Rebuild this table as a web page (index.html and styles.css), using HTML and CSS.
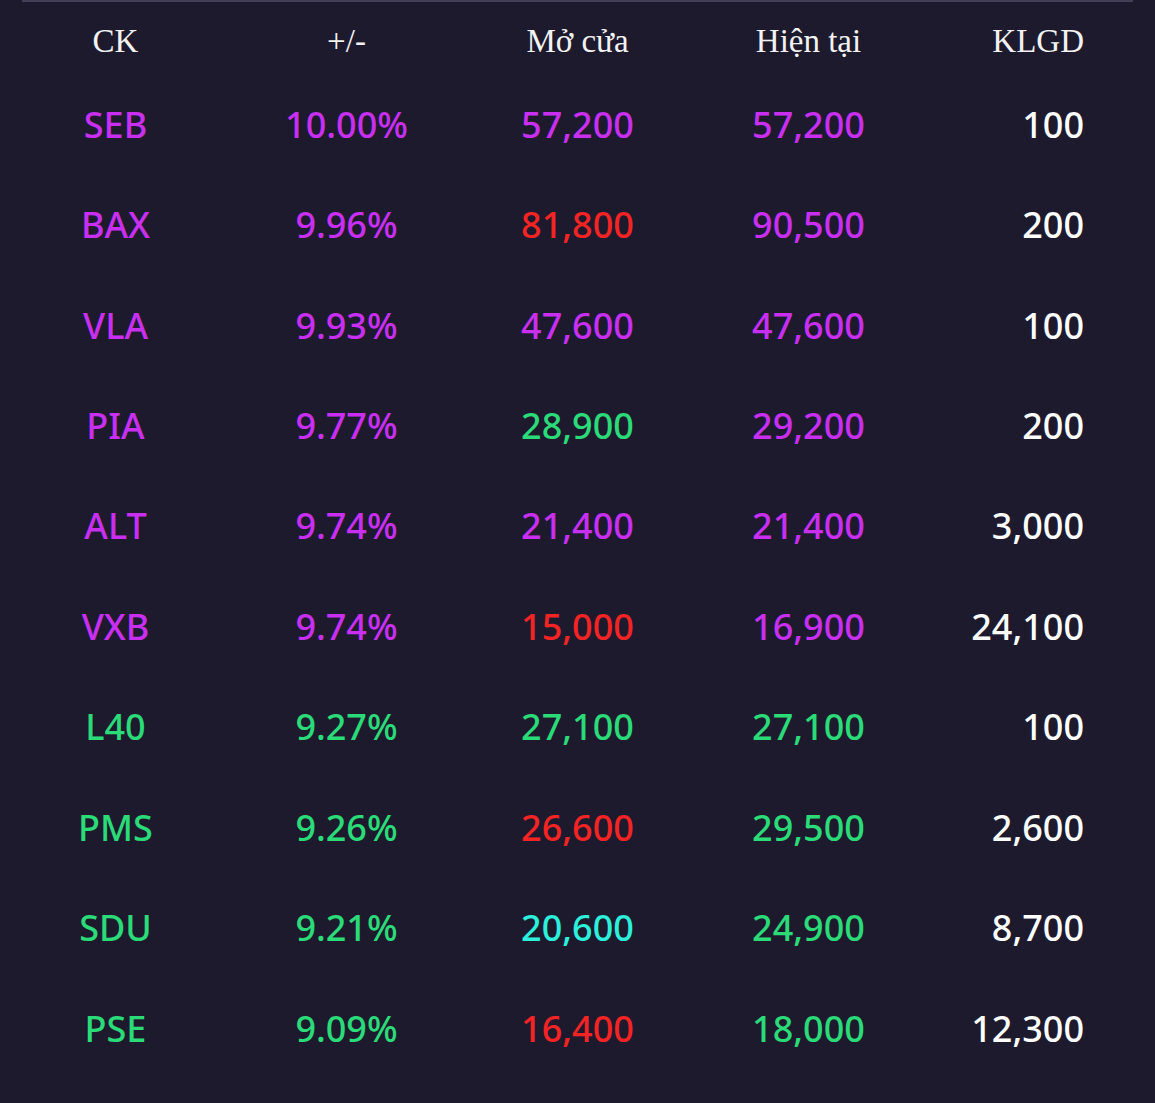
FILE: index.html
```html
<!DOCTYPE html>
<html lang="vi">
<head>
<meta charset="utf-8">
<title>Top tăng giá</title>
<link rel="stylesheet" href="styles.css">
</head>
<body>
<div class="board">
  <div class="rule"></div>
  <div class="row head">
    <div class="cell">CK</div>
    <div class="cell">+/-</div>
    <div class="cell">Mở cửa</div>
    <div class="cell">Hiện tại</div>
    <div class="cell vol">KLGD</div>
  </div>
  <div class="row">
    <div class="cell ceil">SEB</div><div class="cell ceil">10.00%</div><div class="cell ceil">57,200</div><div class="cell ceil">57,200</div><div class="cell vol">100</div>
  </div>
  <div class="row">
    <div class="cell ceil">BAX</div><div class="cell ceil">9.96%</div><div class="cell down">81,800</div><div class="cell ceil">90,500</div><div class="cell vol">200</div>
  </div>
  <div class="row">
    <div class="cell ceil">VLA</div><div class="cell ceil">9.93%</div><div class="cell ceil">47,600</div><div class="cell ceil">47,600</div><div class="cell vol">100</div>
  </div>
  <div class="row">
    <div class="cell ceil">PIA</div><div class="cell ceil">9.77%</div><div class="cell up">28,900</div><div class="cell ceil">29,200</div><div class="cell vol">200</div>
  </div>
  <div class="row">
    <div class="cell ceil">ALT</div><div class="cell ceil">9.74%</div><div class="cell ceil">21,400</div><div class="cell ceil">21,400</div><div class="cell vol">3,000</div>
  </div>
  <div class="row">
    <div class="cell ceil">VXB</div><div class="cell ceil">9.74%</div><div class="cell down">15,000</div><div class="cell ceil">16,900</div><div class="cell vol">24,100</div>
  </div>
  <div class="row">
    <div class="cell up">L40</div><div class="cell up">9.27%</div><div class="cell up">27,100</div><div class="cell up">27,100</div><div class="cell vol">100</div>
  </div>
  <div class="row">
    <div class="cell up">PMS</div><div class="cell up">9.26%</div><div class="cell down">26,600</div><div class="cell up">29,500</div><div class="cell vol">2,600</div>
  </div>
  <div class="row">
    <div class="cell up">SDU</div><div class="cell up">9.21%</div><div class="cell ref">20,600</div><div class="cell up">24,900</div><div class="cell vol">8,700</div>
  </div>
  <div class="row">
    <div class="cell up">PSE</div><div class="cell up">9.09%</div><div class="cell down">16,400</div><div class="cell up">18,000</div><div class="cell vol">12,300</div>
  </div>
</div>
</body>
</html>
```

FILE: styles.css
```css
html, body {
  margin: 0;
  padding: 0;
  background: #1d1a2e;
}
body {
  width: 1155px;
  height: 1103px;
  overflow: hidden;
}
.board {
  display: flex;
  flex-direction: column;
}
.rule {
  height: 2px;
  margin: 0 22px;
  background: #413e56;
}
.row {
  display: grid;
  grid-template-columns: repeat(5, 231px);
  height: 100.44px;
  align-items: center;
  font-family: "Noto Sans", "Open Sans", sans-serif;
  font-size: 36px;
  font-weight: 500;
  color: #ffffff;
}
.row.head {
  height: 72px;
  align-items: start;
  box-sizing: border-box;
  padding-top: 23px;
  font-family: "Liberation Serif", "Times New Roman", serif;
  font-size: 33px;
  font-weight: 400;
  line-height: 33px;
  color: #f2f2f2;
}
.cell {
  text-align: center;
  white-space: nowrap;
}
.cell.vol {
  text-align: right;
  padding-right: 71px;
}
.ceil { color: #c92ff0; }
.up { color: #2adb78; }
.down { color: #f52424; }
.ref { color: #2cf0dc; }
```
